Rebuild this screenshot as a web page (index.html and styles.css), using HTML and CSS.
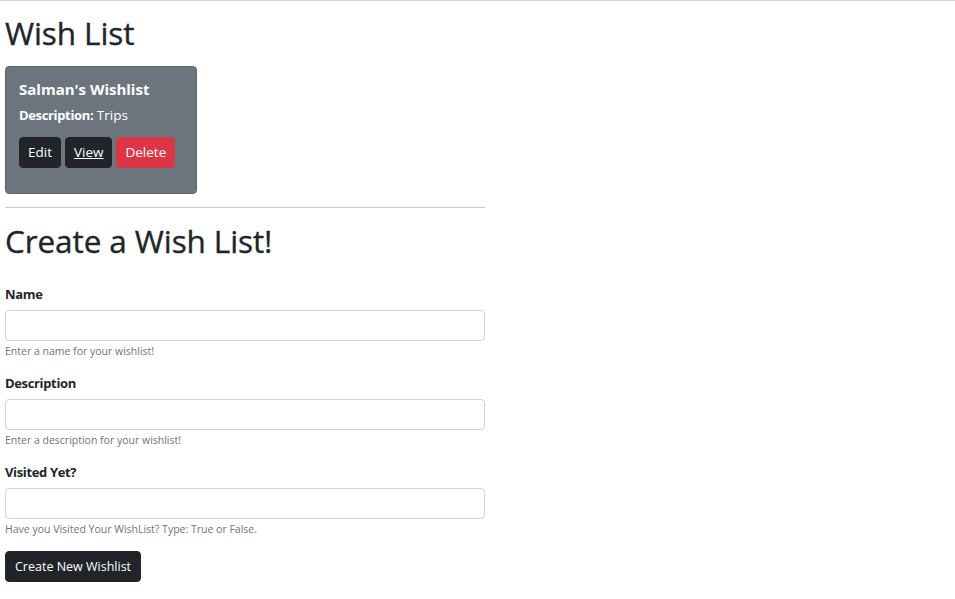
FILE: index.html
```html
<!DOCTYPE html>
<html lang="en">
<head>
<meta charset="utf-8">
<title>Wish List</title>
<link rel="stylesheet" href="styles.css">
</head>
<body>
<div class="topline"></div>
<main class="container">
  <h1 class="page-title">Wish List</h1>
  <div class="card">
    <h5 class="card-title">Salman's Wishlist</h5>
    <p class="card-text"><strong>Description:</strong> Trips</p>
    <div class="actions">
      <button class="btn btn-dark" type="button">Edit</button>
      <a class="btn btn-dark btn-link" href="#">View</a>
      <button class="btn btn-danger" type="button">Delete</button>
    </div>
  </div>
  <hr class="divider">
  <h1 class="page-title create-title">Create a Wish List!</h1>
  <form class="wish-form">
    <div class="field">
      <label class="label" for="name">Name</label>
      <input class="input" id="name" type="text">
      <div class="help">Enter a name for your wishlist!</div>
    </div>
    <div class="field">
      <label class="label" for="desc">Description</label>
      <input class="input" id="desc" type="text">
      <div class="help">Enter a description for your wishlist!</div>
    </div>
    <div class="field">
      <label class="label" for="visited">Visited Yet?</label>
      <input class="input" id="visited" type="text">
      <div class="help">Have you Visited Your WishList? Type: True or False.</div>
    </div>
    <button class="btn btn-dark submit" type="submit">Create New Wishlist</button>
  </form>
</main>
</body>
</html>
```

FILE: styles.css
```css
* { box-sizing: border-box; }

html, body {
  margin: 0;
  padding: 0;
  background: #fff;
}

body {
  font-family: "Open Sans", "Noto Sans", sans-serif;
  color: #212529;
  font-size: 14px;
}

.topline {
  border-top: 1px solid #cfcfcf;
}

.container {
  width: 490px;
  padding: 0 5px;
}

.page-title {
  font-size: 31.5px;
  font-weight: 400;
  line-height: 38px;
  margin: 13px 0 14px;
  letter-spacing: -0.1px;
  -webkit-text-stroke: 0.35px #212529;
}

.create-title {
  margin: 14px 0 24px;
}

.card {
  width: 192px;
  height: 128px;
  background: #6c757d;
  border: 1px solid #5d646b;
  border-radius: 4px;
  padding: 13px 13px;
  color: #fff;
}

.card-title {
  margin: 0 0 6px;
  font-size: 15px;
  font-weight: 700;
  line-height: 19px;
}

.card-text {
  margin: 0 0 11px;
  font-size: 13.5px;
  line-height: 21px;
}

.card-text strong {
  font-size: 13px;
  font-weight: 700;
  letter-spacing: -0.35px;
}

.actions {
  display: flex;
  gap: 4px;
}

.btn {
  display: inline-flex;
  align-items: center;
  justify-content: center;
  font-family: inherit;
  font-size: 13.5px;
  line-height: 21px;
  height: 31px;
  padding: 4px 8px;
  border: 1px solid transparent;
  border-radius: 4px;
  color: #fff;
  text-decoration: none;
  cursor: pointer;
}

.btn-dark {
  background: #212529;
  border-color: #212529;
}

.btn-link {
  text-decoration: underline;
}

.btn-danger {
  background: #dc3545;
  border-color: #dc3545;
}

.divider {
  margin: 13px 0 0;
  border: 0;
  border-top: 1px solid #c8c9ca;
  width: 480px;
}

.wish-form {
  width: 480px;
}

.field {
  display: flex;
  flex-direction: column;
  margin-bottom: 13px;
}

.label {
  font-size: 13px;
  font-weight: 700;
  line-height: 21px;
  margin-bottom: 5px;
  letter-spacing: -0.35px;
}

.input {
  width: 480px;
  height: 31px;
  border: 1px solid #ced4da;
  border-radius: 4px;
  padding: 4px 8px;
  font-family: inherit;
  font-size: 14px;
  background: #fff;
}

.help {
  margin-top: 2px;
  font-size: 10.5px;
  line-height: 17px;
  color: #6c757d;
}

.submit {
  font-size: 12.5px;
  padding: 4px 9px;
}
```
